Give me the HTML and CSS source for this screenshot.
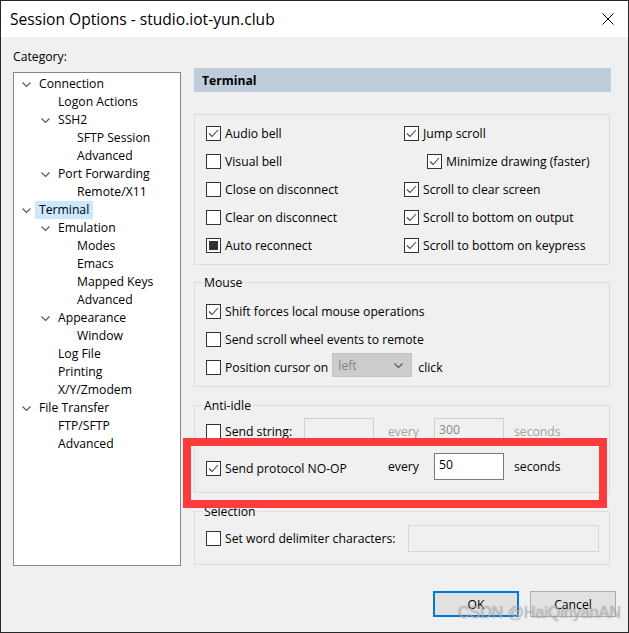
FILE: index.html
```html
<!DOCTYPE html>
<html>
<head>
	<meta charset=utf-8>
	<title>Session Options</title>
	<link rel="stylesheet" href="styles.css">
</head>
<body>
<div class=window>
	<div class=titlebar>
		<span class=title>Session Options - studio.iot-yun.club</span>
		<svg class=close width=12 height=12 viewBox="0 0 12 12"><path d="M0.5 0.5L11.5 11.5M11.5 0.5L0.5 11.5"/></svg>
	</div>
	<div class=main>
		<div class=sidebar>
			<div class=caption>Category:</div>
			<ul class=tree>
				<li class="item l0"><span class="twisty open"></span>Connection</li>
				<li class="item l1"><span class=twisty></span>Logon Actions</li>
				<li class="item l1"><span class="twisty open"></span>SSH2</li>
				<li class="item l2"><span class=twisty></span>SFTP Session</li>
				<li class="item l2"><span class=twisty></span>Advanced</li>
				<li class="item l1"><span class="twisty open"></span>Port Forwarding</li>
				<li class="item l2"><span class=twisty></span>Remote/X11</li>
				<li class="item l0"><span class="twisty open"></span><span class=selected>Terminal</span></li>
				<li class="item l1"><span class="twisty open"></span>Emulation</li>
				<li class="item l2"><span class=twisty></span>Modes</li>
				<li class="item l2"><span class=twisty></span>Emacs</li>
				<li class="item l2"><span class=twisty></span>Mapped Keys</li>
				<li class="item l2"><span class=twisty></span>Advanced</li>
				<li class="item l1"><span class="twisty open"></span>Appearance</li>
				<li class="item l2"><span class=twisty></span>Window</li>
				<li class="item l1"><span class=twisty></span>Log File</li>
				<li class="item l1"><span class=twisty></span>Printing</li>
				<li class="item l1"><span class=twisty></span>X/Y/Zmodem</li>
				<li class="item l0"><span class="twisty open"></span>File Transfer</li>
				<li class="item l1"><span class=twisty></span>FTP/SFTP</li>
				<li class="item l1"><span class=twisty></span>Advanced</li>
			</ul>
		</div>
		<div class=panel>
			<div class=panel-head>Terminal</div>

			<div class="group terminal-opts">
				<label class=opt><span class="cb on"></span>Audio bell</label>
				<label class=opt><span class="cb on"></span>Jump scroll</label>
				<label class=opt><span class=cb></span>Visual bell</label>
				<label class="opt sub"><span class="cb on"></span>Minimize drawing (faster)</label>
				<label class=opt><span class=cb></span>Close on disconnect</label>
				<label class=opt><span class="cb on"></span>Scroll to clear screen</label>
				<label class=opt><span class=cb></span>Clear on disconnect</label>
				<label class=opt><span class="cb on"></span>Scroll to bottom on output</label>
				<label class=opt><span class="cb mixed"></span>Auto reconnect</label>
				<label class=opt><span class="cb on"></span>Scroll to bottom on keypress</label>
			</div>

			<div class="group mouse">
				<div class=legend>Mouse</div>
				<label class=opt><span class="cb on"></span>Shift forces local mouse operations</label>
				<label class=opt><span class=cb></span>Send scroll wheel events to remote</label>
				<div class=opt>
					<span class=cb></span>Position cursor on
					<span class=select>left<svg width=9 height=5 viewBox="0 0 9 5"><path d="M0.5 0.5L4.5 4.5L8.5 0.5"/></svg></span>
					<span class=after-select>click</span>
				</div>
			</div>

			<div class="group anti-idle">
				<div class=legend>Anti-idle</div>
				<div class=idle-grid>
					<label class=opt><span class=cb></span>Send string:</label>
					<span class="field off"></span>
					<span class=dim>every</span>
					<span class="field off">300</span>
					<span class=dim>seconds</span>

					<label class="opt wide"><span class="cb on"></span>Send protocol NO-OP</label>
					<span>every</span>
					<span class=field>50</span>
					<span>seconds</span>
				</div>
			</div>

			<div class="group selection">
				<div class=legend>Selection</div>
				<div class=opt>
					<span class=cb></span>Set word delimiter characters:
					<span class="field off long"></span>
				</div>
			</div>
		</div>
	</div>
	<div class=buttons>
		<button class="btn default">OK</button>
		<button class=btn>Cancel</button>
	</div>
	<div class=highlight></div>
	<div class=watermark>CSDN @HaiQinyanAN</div>
</div>
<script>
	// checkbox marks and tree chevrons
	for(let cb of document.querySelectorAll('.cb.on')){
		cb.innerHTML = '<svg width=13 height=13 viewBox="0 0 13 13"><path d="M2 6.5L5 9.5L11 3"/></svg>'
	}
	for(let tw of document.querySelectorAll('.twisty.open')){
		tw.innerHTML = '<svg width=9 height=5 viewBox="0 0 9 5"><path d="M0.5 0.5L4.5 4.5L8.5 0.5"/></svg>'
	}
</script>
</body>
</html>
```

FILE: styles.css
```css
* {
	box-sizing: border-box;
}
body {
	margin: 0;
	background: #1f1f1f;
	font-family: "Open Sans", "Noto Sans", sans-serif;
	font-size: 12.2px;
	color: #000;
}
.window {
	position: relative;
	width: 629px;
	height: 633px;
	border: 1px solid #262626;
	background: #f0f0f0;
	display: flex;
	flex-direction: column;
	overflow: hidden;
}
.titlebar {
	height: 36px;
	flex: none;
	background: #fff;
	display: flex;
	align-items: center;
	justify-content: space-between;
	padding: 0 14px 0 9px;
}
.title {
	font-size: 15.6px;
}
.close path {
	stroke: #000;
	stroke-width: 1;
	fill: none;
}
.main {
	display: flex;
	align-items: flex-start;
	flex: none;
}
.sidebar {
	margin-left: 12px;
	width: 168px;
}
.caption {
	margin-top: 12px;
	line-height: 16px;
}
.tree {
	list-style: none;
	margin: 7px 0 0;
	padding: 2px 0 0;
	height: 494px;
	background: #fff;
	border: 1px solid #828790;
}
.item {
	height: 18px;
	line-height: 18px;
	display: flex;
	align-items: center;
	white-space: nowrap;
}
.l0 { padding-left: 8px; }
.l1 { padding-left: 27px; }
.l2 { padding-left: 46px; }
.twisty {
	width: 17px;
	flex: none;
	display: flex;
	align-items: center;
}
.twisty svg path,
.select svg path {
	stroke: #555;
	stroke-width: 1.1;
	fill: none;
}
.selected {
	background: #cce8ff;
	margin-left: -4px;
	padding: 0 4px;
}
.panel {
	margin-left: 13px;
	width: 417px;
}
.panel-head {
	margin-top: 31px;
	height: 24px;
	line-height: 25px;
	padding-left: 8px;
	background: #bfccd9;
	font-weight: bold;
}
.group {
	width: 416px;
	border: 1px solid #dcdcdc;
	margin-top: 17px;
	padding: 0 10px 0 11px;
}
.legend {
	width: max-content;
	margin: -9px 0 0 -4px;
	padding: 0 2px;
	height: 16px;
	line-height: 17px;
	background: #f0f0f0;
}
.opt {
	display: flex;
	align-items: center;
	height: 28px;
	white-space: nowrap;
}
.cb {
	width: 15px;
	height: 15px;
	flex: none;
	margin-right: 4px;
	border: 1px solid #333;
	background: #fff;
	display: flex;
	align-items: center;
	justify-content: center;
}
.cb svg path {
	stroke: #444;
	stroke-width: 1.1;
	fill: none;
}
.cb.mixed::after {
	content: "";
	width: 9px;
	height: 9px;
	background: #333;
}
.terminal-opts {
	margin-top: 22px;
	padding-top: 4px;
	padding-bottom: 5px;
	display: grid;
	grid-template-columns: 198px 1fr;
}
.opt.sub {
	padding-left: 23px;
}
.mouse {
	padding-bottom: 5px;
}
.mouse .legend {
	margin-bottom: 7px;
}
.select {
	margin-left: 4px;
	margin-top: -4px;
	width: 80px;
	height: 24px;
	padding: 0 8px 0 5px;
	background: #cccccc;
	border: 1px solid #c4c4c4;
	color: #838383;
	display: flex;
	align-items: center;
	justify-content: space-between;
}
.after-select {
	margin-left: 6px;
}
.anti-idle {
	margin-top: 18px;
	padding-bottom: 12px;
}
.idle-grid {
	margin-top: 5px;
	display: grid;
	grid-template-columns: 98px 84px 46px 80px auto;
	grid-auto-rows: 27px;
	row-gap: 8px;
	align-items: center;
}
.idle-grid .opt {
	height: 27px;
}
.idle-grid .wide {
	grid-column: 1 / 3;
	margin-top: 3px;
}
.field {
	width: 70px;
	height: 27px;
	border: 1px solid #7a7a7a;
	background: #fff;
	padding: 2px 0 0 4px;
	line-height: 18px;
}
.field.off {
	border-color: #cfcfcf;
	background: #f0f0f0;
	color: #8a8a8a;
}
.dim {
	color: #a3a3a3;
}
.selection {
	margin-top: 18px;
	padding-bottom: 12px;
}
.selection .opt {
	margin-top: 6px;
	height: 27px;
}
.field.long {
	width: 191px;
	margin-left: auto;
	border-color: #d6d6d6;
}
.buttons {
	margin-top: 25px;
	display: flex;
	justify-content: flex-end;
	gap: 11px;
	padding-right: 12px;
}
.btn {
	width: 86px;
	height: 26px;
	font: inherit;
	background: #e1e1e1;
	border: 1px solid #adadad;
	padding: 0;
}
.btn.default {
	border: 2px solid #0078d7;
}
.highlight {
	position: absolute;
	left: 182px;
	top: 437px;
	width: 424px;
	height: 70px;
	border: 8px solid #fd3b3b;
}
.watermark {
	position: absolute;
	left: 457px;
	top: 603px;
	font-family: "Liberation Sans", sans-serif;
	font-size: 16px;
	color: rgba(255, 255, 255, .55);
	text-shadow: 0 0 1px rgba(0, 0, 0, .55);
	white-space: nowrap;
}
```
